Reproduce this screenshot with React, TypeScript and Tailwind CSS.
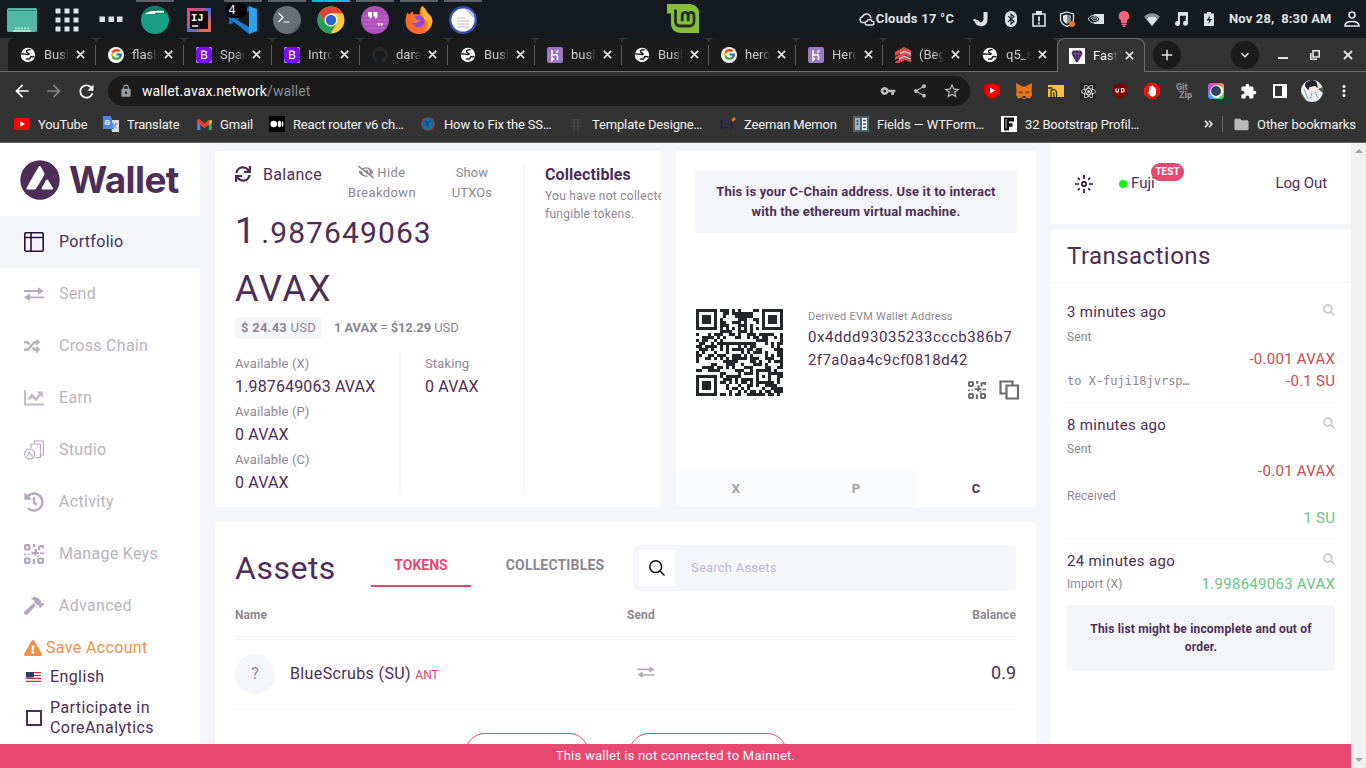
import React from "react";
import {
  FaSync, FaEyeSlash, FaSearch, FaRandom, FaHistory, FaHammer, FaExclamationTriangle, FaGithub, FaReact,
} from "react-icons/fa";
import { FcGoogle } from "react-icons/fc";
import { BsBootstrapFill } from "react-icons/bs";
import {
  MdVpnKey, MdShare, MdStarBorder, MdExtension, MdLock, MdFolder, MdArrowBack, MdArrowForward, MdRefresh,
  MdMoreVert, MdAdd, MdExpandMore,
} from "react-icons/md";

/* ---------- QR code (version 3, level M) ---------- */
const N = 29;
function segment(bits: number[], value: number, len: number) {
  for (let i = len - 1; i >= 0; i--) bits.push((value >> i) & 1);
}
function gfMul(a: number, b: number) {
  let r = 0;
  for (let i = 7; i >= 0; i--) {
    r = (r << 1) ^ ((r >> 7) * 0x11d);
    r ^= ((b >> i) & 1) * a;
  }
  return r;
}
function codewords(text: string) {
  const bits: number[] = [];
  const parts = text.match(/\d{6,}|(?:(?!\d{6,}).)+/g) || [];
  for (const p of parts) {
    if (/^\d{6,}$/.test(p)) {
      segment(bits, 1, 4);
      segment(bits, p.length, 10);
      for (let i = 0; i < p.length; i += 3) {
        const g = p.slice(i, i + 3);
        segment(bits, Number(g), g.length * 3 + 1);
      }
    } else {
      segment(bits, 4, 4);
      segment(bits, p.length, 8);
      for (const c of p) segment(bits, c.charCodeAt(0), 8);
    }
  }
  segment(bits, 0, Math.min(4, 352 - bits.length));
  while (bits.length % 8) bits.push(0);
  const data: number[] = [];
  for (let i = 0; i < bits.length; i += 8) data.push(parseInt(bits.slice(i, i + 8).join(""), 2));
  for (let pad = 0xec; data.length < 44; pad ^= 0xec ^ 0x11) data.push(pad);
  const gen: number[] = new Array(26).fill(0);
  gen[25] = 1;
  let root = 1;
  for (let i = 0; i < 26; i++) {
    for (let j = 0; j < 26; j++) {
      gen[j] = gfMul(gen[j], root);
      if (j + 1 < 26) gen[j] ^= gen[j + 1];
    }
    root = gfMul(root, 2);
  }
  const ec: number[] = new Array(26).fill(0);
  for (const b of data) {
    const f = b ^ (ec.shift() as number);
    ec.push(0);
    gen.forEach((g, i) => (ec[i] ^= gfMul(g, f)));
  }
  return data.concat(ec);
}
const MASK = 4;
const masked = (x: number, y: number) => (Math.floor(x / 3) + Math.floor(y / 2)) % 2 === 0;
function build(text: string) {
  const m: boolean[][] = Array.from({ length: N }, () => new Array(N).fill(false));
  const fn: boolean[][] = Array.from({ length: N }, () => new Array(N).fill(false));
  const set = (x: number, y: number, v: boolean) => {
    if (x < 0 || y < 0 || x >= N || y >= N) return;
    m[y][x] = v;
    fn[y][x] = true;
  };
  for (let i = 0; i < N; i++) {
    set(6, i, i % 2 === 0);
    set(i, 6, i % 2 === 0);
  }
  for (const [cx, cy] of [[3, 3], [N - 4, 3], [3, N - 4]])
    for (let dy = -4; dy <= 4; dy++)
      for (let dx = -4; dx <= 4; dx++) {
        const d = Math.max(Math.abs(dx), Math.abs(dy));
        set(cx + dx, cy + dy, d !== 2 && d !== 4);
      }
  for (let dy = -2; dy <= 2; dy++)
    for (let dx = -2; dx <= 2; dx++) set(22 + dx, 22 + dy, Math.max(Math.abs(dx), Math.abs(dy)) !== 1);
  let rem = MASK;
  for (let i = 0; i < 10; i++) rem = (rem << 1) ^ ((rem >> 9) * 0x537);
  const f = ((MASK << 10) | rem) ^ 0x5412;
  const bit = (i: number) => ((f >> i) & 1) === 1;
  for (let i = 0; i <= 5; i++) set(8, i, bit(i));
  set(8, 7, bit(6));
  set(8, 8, bit(7));
  set(7, 8, bit(8));
  for (let i = 9; i < 15; i++) set(14 - i, 8, bit(i));
  for (let i = 0; i < 8; i++) set(N - 1 - i, 8, bit(i));
  for (let i = 8; i < 15; i++) set(8, N - 15 + i, bit(i));
  set(8, N - 8, true);
  const cw = codewords(text);
  let k = 0;
  for (let right = N - 1; right >= 1; right -= 2) {
    if (right === 6) right = 5;
    for (let v = 0; v < N; v++)
      for (let j = 0; j < 2; j++) {
        const x = right - j;
        const y = ((right + 1) & 2) === 0 ? N - 1 - v : v;
        if (fn[y][x]) continue;
        let b = false;
        if (k < cw.length * 8) b = ((cw[k >> 3] >> (7 - (k & 7))) & 1) === 1;
        k++;
        m[y][x] = b !== masked(x, y);
      }
  }
  return m;
}
function QrCode({ value }: { value: string }) {
  let d = "";
  build(value).forEach((row, y) => row.forEach((v, x) => { if (v) d += `M${x} ${y}h1v1h-1z`; }));
  return (
    <svg viewBox="0 0 29 29" className="h-[87px] w-[87px]" shapeRendering="crispEdges">
      <path d={d} fill="#242729" />
    </svg>
  );
}

/* ---------- small drawings ---------- */
const Globe = () => (
  <svg viewBox="0 0 16 16" className="h-4 w-4">
    <circle cx="8" cy="8" r="7.2" fill="#fff" />
    <path d="M10.500 2.800C8 2.400 6.200 3.400 6.600 4.900c.3 1.100 2.300.9 2.500 1.900.1.900-1.400.6-2.600.5C5 7.200 3.500 6.700 1.200 7M14.600 9.800c-1.400.1-2.300-.6-3.500-.1-1.200.5-.6 1.600-1.600 2.100-.9.5-2.200-.1-3.400.4" fill="none" stroke="#1b1b1b" strokeWidth="1.500" />
  </svg>
);
const Cross = ({ cls }: { cls: string }) => (
  <svg viewBox="0 0 10 10" className={cls} fill="none" stroke="#e4e4e4" strokeWidth="1.900"><path d="M1 1l8 8M9 1 1 9" /></svg>
);
const GoogleTab = () => (
  <span className="flex h-4 w-4 items-center justify-center rounded-full bg-white"><FcGoogle size={13} /></span>
);
const BootTab = () => (
  <span className="flex h-4 w-4 items-center justify-center rounded-[2px] bg-white"><BsBootstrapFill size={16} color="#7a12f8" /></span>
);
const Heroku = () => (
  <svg viewBox="0 0 16 16" className="h-4 w-4">
    <rect width="16" height="16" rx="2" fill="#9b7bc0" />
    <path d="M5 3v5.600c1.500-.7 5.500-1.800 5.500.6V13M10.800 3c0 1.200-.5 1.900-1.200 2.600M5 10.500v2.800l1.400-1.400z" fill="none" stroke="#fff" strokeWidth="1.500" />
  </svg>
);
const Todo = () => (
  <svg viewBox="0 0 16 16" className="h-4 w-4">
    <path d="M0 5 9 0l7 3.500v3L10 4 0 9zM0 10l9-5 7 3v2.500l-6-2.500-10 5zM0 15l9-5 7 3v2.500l-6-2.500-6 3H0z" fill="#e44a50" />
    <path d="M5 6.500 9.500 4.500 16 7M4 12l5.500-2.700L16 12" stroke="#d8cdd0" strokeWidth="1.500" fill="none" />
  </svg>
);
const Gem = () => (
  <svg viewBox="0 0 16 16" className="h-4 w-4">
    <rect width="16" height="16" fill="#fff" />
    <path d="M4 2.500h8l1.500 3L9 14H7L2.500 5.500z" fill="#3b1f52" />
    <path d="M6 3l1 9M10 3l-1 9M3 6h10" stroke="#8c6ca6" strokeWidth=".8" />
  </svg>
);
const Arrows = ({ cls }: { cls: string }) => (
  <svg viewBox="0 0 20 14" className={cls} fill="#b6a8be">
    <path d="M0 3h14V.3L20 4l-6 3.700V5H0zM20 9.500H6V6.300L0 10.300l6 3.700v-2.700h14z" />
  </svg>
);
const QrGlyph = ({ cls, color }: { cls: string; color: string }) => (
  <svg viewBox="0 0 20 20" className={cls} fill={color}>
    <g fill="none" stroke={color} strokeWidth="2.200">
      <rect x="1.100" y="1.100" width="4.400" height="4.400" rx=".8" />
      <rect x="1.100" y="14.500" width="4.400" height="4.400" rx=".8" />
      <rect x="14.500" y="14.500" width="4.400" height="4.400" rx=".8" />
    </g>
    <path d="M9 0h2.300v3H9zM14 1.500h2V1h4v3.500h-1.800V3.500H16V6h-2zM10.500 5H13v3h2v2h-2.500v1.500H10V10H7.500V8h3zM0 9.500h2V11H0zM4 9.500h1.500V11H4zM8.700 15h2.300v5H8.700zM16 8.500h4v1.800h-4zM13 11.500h2V13h-2z" />
  </svg>
);

/* ---------- desktop panel ---------- */
const Cell = ({ bar, children }: { bar?: string; children: React.ReactNode }) => (
  <div className="flex h-[38px] w-11 flex-col items-center">
    <div className={`h-0.5 w-[38px] ${bar || ""}`} />
    <div className="flex flex-1 items-center justify-center pb-px">{children}</div>
  </div>
);
const Tray = ({ children }: { children: React.ReactNode }) => (
  <div className="flex w-[28.300px] items-center justify-center">{children}</div>
);
function Panel() {
  const g = "bg-[#5b6166]";
  return (
    <div className="flex h-[38px] w-full items-center bg-[#151a1e] pl-px text-[#dfe3e6]">
      <Cell>
        <svg viewBox="0 0 30 24" className="-ml-[2px] h-6 w-[30px]"><rect width="30" height="24" rx="1.500" fill="#52b8a6" /><path d="M1 2.500h28" stroke="#347f76" /><path d="M8 20.500h14" stroke="#a9ded3" strokeWidth="2" strokeDasharray="2 1" /><path d="M6 23h18" stroke="#a9ded3" strokeWidth="2" /></svg>
      </Cell>
      <Cell>
        <svg viewBox="0 0 24 24" className="h-6 w-6" fill="#dfe3e6">{[0, 9, 18].map((y) => [0, 9, 18].map((x) => <rect key={`${x}-${y}`} x={x + 0.500} y={y + 0.500} width="5" height="5" />))}</svg>
      </Cell>
      <Cell>
        <svg viewBox="0 0 24 24" className="h-6 w-6" fill="#dfe3e6">{[0.500, 9.500, 18].map((x) => <rect key={x} x={x} y="8.500" width="5.500" height="5.500" />)}</svg>
      </Cell>
      <Cell bar={g}>
        <svg viewBox="0 0 28 28" className="h-7 w-7"><circle cx="14" cy="14" r="14" fill="#18a085" /><path d="M1.500 8A14 14 0 0 1 26.500 8z" fill="#117a65" /><path d="M4 7.500C8 5 14 4.500 23 5v1.800h-9V8H4z" fill="#fff" /></svg>
      </Cell>
      <Cell>
        <svg viewBox="0 0 24 24" className="h-6 w-6"><defs><linearGradient id="ij" x1="0" y1="0" x2="1" y2="1"><stop offset="0" stopColor="#e8467c" /><stop offset=".35" stopColor="#c9518f" /><stop offset=".5" stopColor="#3d6fe0" /><stop offset=".8" stopColor="#e06a55" /></linearGradient></defs><rect width="24" height="24" fill="url(#ij)" /><rect x="3" y="3" width="18" height="18" fill="#0d0a0d" /><text x="4" y="13" fontFamily="Liberation Mono" fontWeight="bold" fontSize="10.500" fill="#fff">IJ</text><path d="M5 18h6" stroke="#fff" strokeWidth="1.500" /></svg>
      </Cell>
      <Cell bar={g}>
        <div className="relative h-7 w-7">
          <svg viewBox="0 0 28 28" className="h-7 w-7"><path d="M20 0 6 13.500 1.500 10 0 11v6.500l1.500 1L20 5z" fill="#0a70b8" /><path d="M0 11l1.500-1L20 21v7L0 12z" fill="#1381cf" /><path d="M20 0l8 3v22l-8 3z" fill="#29a3ee" /></svg>
          <span className="absolute -left-[4px] -top-[3px] flex h-[15px] w-[22px] items-center justify-center rounded-full bg-black pr-2 font-['DejaVu_Sans_Mono'] text-[12px] leading-none text-white">4</span>
        </div>
      </Cell>
      <Cell bar={g}>
        <svg viewBox="0 0 28 28" className="h-7 w-7"><circle cx="14" cy="14" r="14" fill="#6a6f74" /><path d="M5.500 7 10 11.500 5.500 16M10.500 16h6" fill="none" stroke="#fff" strokeWidth="1.200" /><path d="M17 27.500 27.500 17A14 14 0 0 1 17 27.500z" fill="#595e62" /></svg>
      </Cell>
      <Cell bar="bg-[#00b8d8]">
        <svg viewBox="0 0 28 28" className="h-7 w-7"><circle cx="14" cy="14" r="13.500" fill="#fdc93c" /><path d="M2.300 7.200A13.500 13.500 0 0 1 25.700 7.200H14L8.200 17.300z" fill="#dc4437" /><path d="M2.300 7.200A13.500 13.500 0 0 0 13.500 27.500L19.800 17.300 14 20.500 8.200 17.300z" fill="#23a05a" /><circle cx="14" cy="14" r="6.500" fill="#fff" /><circle cx="14" cy="14" r="5.200" fill="#2a66d0" /></svg>
      </Cell>
      <Cell bar={g}>
        <svg viewBox="0 0 28 28" className="h-7 w-7"><circle cx="14" cy="14" r="14" fill="#ae50b8" /><path d="M2 10h24M1 14h26M2 18h24M4 22h20" stroke="#c27cca" strokeWidth=".7" /><path d="M7 6h4v5l-2 2-.5-2.500H7zM12.500 6h4v5l-2 2-.5-2.500h-1.500zM16.500 17h2v2.500l-1 .8zM19.500 17h2v2.500l-1 .8z" fill="#fff" /></svg>
      </Cell>
      <Cell bar={g}>
        <svg viewBox="0 0 28 28" className="h-7 w-7"><path d="M17 0c4 3 4.500 5 5.500 7 3 2 5.500 5 5 9.500A13.700 13.700 0 0 1 14 28C6 28 .5 22.500.5 15c0-4 1-7 2.500-9l1 3 3.500-4 1 3.500c2-.5 4-.5 6 0C14.500 5 15 2 17 0z" fill="#ff6b2c" /><path d="M17 0c4 3 4.500 5 5.500 7 3 2 5 5 4.500 9.500-1 5-4 8-7 9 3-4 3-8 1-11-2-2-6-5-4-14.500z" fill="#ffb52e" /><circle cx="13.500" cy="15.500" r="6" fill="#9548e0" /><path d="M5 12c2-1.500 5-1 6 1 1 1.500 3 1 4 .5-1 3-3 3-5 3.500-3 0-4-2-5-5z" fill="#ff7a30" /></svg>
      </Cell>
      <Cell bar={g}>
        <svg viewBox="0 0 28 28" className="h-7 w-7"><circle cx="14" cy="14" r="14" fill="#3a4db2" /><circle cx="14" cy="14" r="11.500" fill="#fff" /><path d="M15 2.500 25.500 13l-.5-5-5-4.500z" fill="#c5cae9" /><path d="M8 12h8M8 15h12M8 18h12M8 21h12" stroke="#b5b9bd" strokeWidth="1.200" /></svg>
      </Cell>
      <div className="flex w-[182px]" />
      <svg viewBox="0 0 32 29" className="-mt-px h-[29px] w-8"><path d="M0 0h22c6 0 10 3.500 10 9v20H14C8 29 4 25 4 20V9.500H0z" fill="#86be3c" /><path d="M8.500 5.500v11.800c0 3 1.800 4.700 4.500 4.700h9.500c2.500 0 4.500-1.700 4.500-4.500v-5.700c0-4.500-5.800-4.500-5.800 0v5.500M21.200 11.800c0-4.500-6-4.500-6 0v5.500" fill="none" stroke="#22301a" strokeWidth="2.800" /></svg>
      <div className="ml-auto flex items-center font-['Roboto'] text-[13px] font-bold leading-none">
        <svg viewBox="0 0 18 16" className="mr-px h-4 w-4" fill="none" stroke="#dfe3e6" strokeWidth="1.600"><path d="M7 12H4a3.200 3.200 0 0 1-.3-6.300A5 5 0 0 1 13 5.500c.3.600.3 1.300.2 1.900M9 14.800a2.100 2.100 0 0 1 .2-4.200 2.800 2.800 0 0 1 5.400 0 2.100 2.100 0 0 1 .2 4.200z" /></svg>
        <span className="w-[89px] -mt-[2px] whitespace-nowrap tracking-[0.25px]">Clouds 17 °C</span>
        <div className="flex w-[32px] items-center justify-center"><svg viewBox="0 0 16 16" className="h-4 w-4"><path d="M3.500 9.500C4 12.500 6 13.500 8.800 13.200c2.700-.4 3.700-2.500 3.700-5V1" fill="none" stroke="#dfe3e6" strokeWidth="4" /><path d="M.5 8.500 6 11.500" stroke="#dfe3e6" strokeWidth="2" /></svg></div>
        <Tray><svg viewBox="0 0 12 16" className="h-4 w-3"><rect width="12" height="16" rx="6" fill="#dfe3e6" /><path d="M3 5.200 9 10.500 6 13V3l3 2.500-6 5.300" fill="none" stroke="#151a1e" strokeWidth="1.100" /></svg></Tray>
        <Tray><svg viewBox="0 0 14 16" className="h-4 w-[14px]"><path d="M1 3h12v12H1z" fill="none" stroke="#dfe3e6" strokeWidth="1.600" /><path d="M4 0h6v4H4z" fill="#dfe3e6" /><path d="M7 5.500v5M7 11.500v2" stroke="#dfe3e6" strokeWidth="1.800" /></svg></Tray>
        <Tray><svg viewBox="0 0 16 16" className="h-4 w-4"><path d="M8 1 14.500 3v5c0 3.500-3 6-6.500 7.300C4.500 14 1.500 11.500 1.500 8V3z" fill="none" stroke="#dfe3e6" strokeWidth="1.300" /><path d="M8 3.500v9.500C5.500 12 4 10 4 8V4.500z" fill="#dfe3e6" /><path d="M8 3.500v9.500C10.500 12 12 10 12 8V4.500z" fill="#8a8f93" /><circle cx="13" cy="13" r="3" fill="#f1712b" /></svg></Tray>
        <Tray><svg viewBox="0 0 16 12" className="h-3 w-4"><path d="M6 1h10v10H6z" fill="#dfe3e6" /><path d="M0 6c3-5 9-5 12 0-3 5-9 5-12 0z" fill="#151a1e" stroke="#dfe3e6" /><path d="M3 6c2-3 5-3 7 0-2 2-4 2.500-5.500.5C5.500 5 7 5 8 6" fill="none" stroke="#dfe3e6" /></svg></Tray>
        <Tray><svg viewBox="0 0 12 16" className="h-4 w-3"><path d="M6 0a5.200 5.200 0 0 1 3 9.500V12H3V9.500A5.200 5.200 0 0 1 6 0zM3.500 12.500h5V14h-5zM4.500 14.500h3V16h-3z" fill="#f9637f" /></svg></Tray>
        <Tray><svg viewBox="0 0 16 13" className="h-[13px] w-4"><path d="M0 3.500C4.500-1 11.500-1 16 3.500L8 13z" fill="#8c9195" /><path d="M2.500 6C5.500 3 10.500 3 13.500 6L8 13z" fill="#dfe3e6" /></svg></Tray>
        <Tray><svg viewBox="0 0 14 14" className="h-[14px] w-[14px]" fill="#dfe3e6"><path d="M4 0h10v11.200a2.500 2.500 0 1 1-2.200-2.400V3.800H6v8a2.500 2.500 0 1 1-2-2.700z" /></svg></Tray>
        <Tray><svg viewBox="0 0 10 14" className="h-[14px] w-[10px]"><path d="M0 1.500h3V0h4v1.500h3V14H0z" fill="#dfe3e6" /><path d="M6 3.500 2.500 8.500H5L4.500 12 7.800 7H5.500z" fill="#151a1e" /></svg></Tray>
        <span className="-mt-[2px] ml-[6px] w-[103px] whitespace-nowrap tracking-[0.15px]">Nov 28,&nbsp; 8:30 AM</span>
        <svg viewBox="0 0 16 16" className="ml-3 mr-[6px] h-4 w-4" fill="none" stroke="#dfe3e6" strokeWidth="1.700"><circle cx="8" cy="4" r="3" /><path d="M1 15c0-3 2.500-4.500 7-4.500s7 1.500 7 4.500z" /></svg>
      </div>
    </div>
  );
}

/* ---------- browser frame ---------- */
const TABS: [React.ReactNode, string, string][] = [
  [<Globe />, "Bush", "w-[88px]"], [<GoogleTab />, "flask", "w-[88px]"], [<BootTab />, "Spac", "w-[88px]"],
  [<BootTab />, "Intro", "w-[88px]"], [<FaGithub size={16} color="#24292e" />, "dara", "w-[88px]"], [<Globe />, "Bush", "w-[87px]"],
  [<Heroku />, "bush", "w-[87px]"], [<Globe />, "Bush", "w-[87px]"], [<GoogleTab />, "hero", "w-[87px]"],
  [<Heroku />, "Hero", "w-[87px]"], [<Todo />, "(Beg", "w-[87px]"], [<Globe />, "q5_s", "w-[87px]"],
];
const TabBody = ({ icon, title }: { icon: React.ReactNode; title: string }) => (
  <>
    <span className="flex w-4 shrink-0 justify-center">{icon}</span>
    <span className="ml-2 w-[25px] shrink-0 overflow-hidden whitespace-nowrap text-[13px] [mask-image:linear-gradient(90deg,#000_60%,transparent)]">{title}</span>
    <Cross cls="ml-[7px] h-[9px] w-[9px] shrink-0" />
  </>
);
function TabStrip() {
  return (
    <div className="flex h-[34px] w-full bg-[#333333] text-[#c9c9c9]">
      <div className="w-2 border-b border-[#6e6c6d]" />
      {TABS.map(([icon, title, w], i) => (
        <div key={i} className={`${w} flex h-[34px] shrink-0 items-center overflow-hidden border-b border-[#6e6c6d] bg-[#333333]`}>
          <div className="flex h-full w-full items-center rounded-t-md bg-[#1b1b1b]">
            <div className={`flex h-5 w-full items-center border-r pl-3 ${i === 11 ? "border-transparent" : "border-[#5c5c5c]"}`}>
              <TabBody icon={icon} title={title} />
            </div>
          </div>
        </div>
      ))}
      <div className="flex h-[34px] w-[88px] shrink-0 items-center rounded-t-lg border-x border-t border-[#6e6c6d] bg-[#333333] pl-[11px] text-white">
        <TabBody icon={<Gem />} title="Fast" />
      </div>
      <div className="flex flex-1 items-center border-b border-[#6e6c6d] pl-2">
        <span className="flex h-7 w-7 items-center justify-center rounded-full bg-[#1b1b1b] text-[#e6e6e6]"><MdAdd size={18} /></span>
        <span className="ml-auto flex h-7 w-7 items-center justify-center rounded-full bg-[#1b1b1b] text-[#e6e6e6]"><MdExpandMore size={16} /></span>
        <svg viewBox="0 0 10 10" className="ml-[19px] h-2.5 w-2.5"><path d="M0 8h10" stroke="#e6e6e6" strokeWidth="2" /></svg>
        <svg viewBox="0 0 10 10" className="ml-[22px] h-2.5 w-2.5" fill="none" stroke="#e6e6e6" strokeWidth="1.600"><path d="M3 .8h6.200V7H3zM.8 3v6.200H7" /></svg>
        <Cross cls="ml-[23px] mr-[13px] h-[10px] w-[10px]" />
      </div>
    </div>
  );
}
const Slot = ({ children }: { children: React.ReactNode }) => <span className="flex w-8 shrink-0 items-center justify-center">{children}</span>;
function Toolbar() {
  return (
    <div className="flex h-[38px] w-full items-center bg-[#333333] pl-[6px]">
      <Slot><MdArrowBack size={20} color="#fff" /></Slot>
      <Slot><MdArrowForward size={20} color="#858585" /></Slot>
      <Slot><MdRefresh size={21} color="#fff" /></Slot>
      <div className="ml-[6px] flex h-[30px] w-[862px] items-center rounded-full bg-[#1b1b1b] pl-[11px] text-[#bdbdbd]">
        <MdLock size={14} color="#9a9ca3" />
        <span className="ml-[9px] flex-1 text-[14px] leading-none tracking-[0.1px] text-[#8d8d8d]"><span className="text-white">wallet.avax.network</span>/wallet</span>
        <Slot><MdVpnKey size={16} /></Slot><Slot><MdShare size={16} /></Slot><Slot><MdStarBorder size={18} /></Slot>
        <span className="w-[2px]" />
      </div>
      <span className="w-[6px]" />
      <Slot><svg viewBox="0 0 16 16" className="h-4 w-4"><path d="M0 2l8-2 8 2v7c0 3-4 6-8 7-4-1-8-4-8-7z" fill="#d40000" /><path d="M1.500 3 8 1.500 14.500 3v6c0 2.500-3 4.500-6.500 5.500C4.500 13.500 1.500 11.500 1.500 9z" fill="#f00" /><path d="M6 4.500v6L11 7.500z" fill="#fff" /></svg></Slot>
      <Slot><svg viewBox="0 0 16 16" className="h-4 w-4"><path d="M0 0l6.500 3.500h3L16 0l-.3 8 .3 4-2 3.500-3.500-1L9 16H7l-1.500-1.500-3.500 1L0 12l.5-4z" fill="#e2761b" /><path d="M2 9l4-1 .5 3zM14 9l-4-1-.5 3z" fill="#8a3d12" /><path d="M6.500 13h3L9 15H7z" fill="#222" /></svg></Slot>
      <Slot><svg viewBox="0 0 16 12" className="h-3 w-4"><path d="M0 0h16v12H0z" fill="#f7c13b" /><path d="M0 3h4.500M3 12V5.500C4.500 4 8 4 8.500 7v5M5.700 7v5" fill="none" stroke="#333" strokeWidth="1.300" /></svg></Slot>
      <Slot><span className="flex h-4 w-4 items-center justify-center bg-[#262626]"><FaReact size={15} color="#fff" /></span></Slot>
      <Slot><svg viewBox="0 0 16 16" className="h-4 w-4"><path d="M8 0c2 1.500 4.500 2 7 2v6c0 4-3.500 6.500-7 8-3.500-1.500-7-4-7-8V2c2.500 0 5-.5 7-2z" fill="#800000" /><path d="M4 5.500V8c0 1.500 2.500 1.500 2.500 0V5.500M9.500 5.500h1a1.800 1.800 0 0 1 0 3.600h-1z" fill="none" stroke="#fff" strokeWidth="1.200" /></svg></Slot>
      <Slot><svg viewBox="0 0 16 16" className="h-4 w-4"><path d="M4.700 0h6.600L16 4.700v6.600L11.300 16H4.700L0 11.300V4.700z" fill="#ee1111" /><path d="M5 7V4.500h1.300V3H8V2.500h1.300V4h1.400v1.500H12V10c0 2-1.300 3.500-3.500 3.500-2 0-3-1.200-4.500-4.500l1-.5z" fill="#fff" /></svg></Slot>
      <Slot><span className="flex flex-col text-[9px] font-black leading-[8px] text-[#8c8c8c]"><span>Git</span><span className="pl-[3px]">Zip</span></span></Slot>
      <Slot><span className="flex h-4 w-4 items-center justify-center rounded-[3px] bg-[conic-gradient(#f94f8b,#f9c23c,#3fd07a,#35a7ff,#b14bff,#f94f8b)]"><span className="flex h-[13px] w-[13px] items-center justify-center rounded-full bg-white"><span className="h-[10px] w-[10px] rounded-full bg-[#33435c]" /></span></span></Slot>
      <Slot><MdExtension size={17} color="#fff" /></Slot>
      <Slot><svg viewBox="0 0 14 14" className="h-3.5 w-3.5"><path d="M1 1h12v12H1z" fill="none" stroke="#fff" strokeWidth="2" /><path d="M9 0h5v14H9z" fill="#fff" /></svg></Slot>
      <Slot><svg viewBox="0 0 22 22" className="h-[22px] w-[22px]"><defs><clipPath id="av"><circle cx="11" cy="11" r="11" /></clipPath></defs><g clipPath="url(#av)"><rect width="22" height="22" fill="#eceef2" /><path d="M4 6c0-7 12-8 12-2l1 4-3-2-4 1-3 3z" fill="#23222a" /><path d="M8 7.500l5-1 2 2.500-2 3-4-1z" fill="#f4e8e2" /><path d="M3 9l4 10M14 12l3 6M11 13l-2 6" stroke="#9aa4bd" strokeWidth="1.200" /><path d="M0 12l5 8H0zM17 9l5-2v6z" fill="#4d5a3e" /></g></svg></Slot>
      <Slot><MdMoreVert size={18} color="#fff" /></Slot>
    </div>
  );
}
const BOOKMARKS: [React.ReactNode, string, string][] = [
  [<svg viewBox="0 0 16 12" className="h-3 w-4"><rect width="16" height="12" rx="2.500" fill="#f00" /><path d="M6.300 3.300v5.400L11 6z" fill="#fff" /></svg>, "YouTube", "w-[89px]"],
  [<svg viewBox="0 0 16 16" className="h-4 w-4"><path d="M7 4h9v12H9z" fill="#dcdcdc" /><path d="M0 0h8l3 13H0z" fill="#4a86e8" /><text x="1.500" y="9" fontSize="8" fontWeight="bold" fill="#fff" fontFamily="Roboto">G</text><path d="M10 8h5M12.500 7v1c0 2-1 3-2 4M11 9l3 3.500" stroke="#8a9296" fill="none" /></svg>, "Translate", "w-[93px]"],
  [<svg viewBox="0 0 16 12" className="h-[11px] w-[15px]"><path d="M0 2v10h3.500V5z" fill="#4285f4" /><path d="M16 2v10h-3.500V5z" fill="#34a853" /><path d="M12.500 1.500 16 1v3l-3.500 3z" fill="#fbbc04" /><path d="M0 1.500C1-.5 2.500 0 3.500 1L8 4.500 12.500 1v5.500L8 10 0 4z" fill="#ea4335" /></svg>, "Gmail", "w-[73px]"],
  [<svg viewBox="0 0 16 16" className="h-4 w-4"><rect width="16" height="16" fill="#000" /><circle cx="4.800" cy="8" r="3.300" fill="#fff" /><ellipse cx="10.500" cy="8" rx="1.700" ry="3.200" fill="#fff" /><ellipse cx="13.600" cy="8" rx=".8" ry="2.900" fill="#fff" /></svg>, "React router v6 ch…", "w-[151px]"],
  [<svg viewBox="0 0 16 16" className="h-4 w-4"><circle cx="8" cy="8" r="6.600" fill="#1b6ca8" stroke="#a02c2c" strokeWidth="1.200" strokeDasharray="12 4" /><path d="M5 4.500c2 1 3 3 3 7M11 4c-2 1-3 2-3 4M5 9h3" stroke="#12507f" fill="none" strokeWidth="1.300" /></svg>, "How to Fix the SS…", "w-[148px]"],
  [<svg viewBox="0 0 16 16" className="h-4 w-4"><path d="M3 4h10M3 7h10M3 10h10M6 3v11M10 3v11" stroke="#494949" strokeWidth="1.200" /></svg>, "Template Designe…", "w-[152px]"],
  [<svg viewBox="0 0 16 16" className="h-4 w-4" fill="none" stroke="#23214a" strokeWidth="1.400"><path d="M3 4.500H1.500v8H3M10 4.500h1.500v8H10M5 7v1.500M8.500 7v1.500M4.500 10.500c1 1.500 3.500 1.500 4.500 0" /><path d="M12 5l3-3" stroke="#f07a10" strokeWidth="2.500" /></svg>, "Zeeman Memon", "w-[133px]"],
  [<svg viewBox="0 0 16 16" className="h-4 w-4"><rect width="16" height="16" fill="#4d6170" /><path d="M2 2h5v12H2z" fill="#9fb4c2" /><path d="M9 2h5v12H9z" fill="#f2f5f7" /><path d="M10 4.500h3M10 8h3M10 11.500h3M3.500 5h2M3.500 8h2" stroke="#34495a" strokeWidth="1.300" /></svg>, "Fields — WTForm…", "w-[148px]"],
  [<svg viewBox="0 0 16 16" className="h-4 w-4"><rect width="16" height="16" fill="#fff" /><path d="M3 1.500h10v4H8v1.700h3.500v3.600H8v3.700H3z" fill="#111" /><path d="M5 3v9.500" stroke="#fff" strokeWidth=".7" /></svg>, "32 Bootstrap Profil…", "w-[190px]"],
];
function Bookmarks() {
  return (
    <div className="flex h-[33px] w-full items-center border-b border-[#676466] bg-[#333333] pb-1 pl-[14px] text-[13px] leading-none text-[#f2f2f2]">
      {BOOKMARKS.map(([icon, label, w]) => (
        <div key={label} className={`${w} flex shrink-0 items-center whitespace-nowrap tracking-[-0.15px]`}>
          <span className="mr-2 flex w-4 justify-center">{icon}</span>{label}
        </div>
      ))}
      <svg viewBox="0 0 9 8" className="ml-[13px] h-2 w-[9px]" fill="none" stroke="#f2f2f2" strokeWidth="1.600"><path d="M1 .8 4 4 1 7.200M5 .8 8 4 5 7.200" /></svg>
      <span className="ml-[9px] mr-[10px] h-4 w-px bg-[#6a6a6a]" />
      <MdFolder size={17} color="#b9b9b9" />
      <span className="ml-[7px] whitespace-nowrap tracking-[-0.05px]">Other bookmarks</span>
    </div>
  );
}

/* ---------- wallet ---------- */
const NavItem = ({ icon, label, active }: { icon: React.ReactNode; label: string; active?: boolean }) => (
  <div className={`flex h-[52px] items-center pl-6 text-[16px] ${active ? "bg-[#f5f6fa] text-[#4c2e56]" : "text-[#b9b5bd]"}`}>
    <span className="flex w-[35px] items-center">{icon}</span>
    <span className="tracking-[0.3px]">{label}</span>
  </div>
);
function Sidebar() {
  return (
    <aside className="h-full w-[200px] shrink-0 bg-white text-[#4c2e56]">
      <div className="flex h-[73px] items-center pl-5">
        <svg viewBox="0 0 40 40" className="h-10 w-10"><circle cx="20" cy="20" r="19.700" fill="#4c2e56" /><path d="M18.300 7.200q1.400-2.200 2.800 0l3 5.300q.7 1.300 0 2.800L16.500 28q-.8 1.600-2.800 1.600H8q-2.300 0-1.300-2zM25.800 20.600q1.300-2 2.600 0l4.300 7.200q1 1.800-1 1.800h-8.800q-2 0-1-1.800z" fill="#fff" /></svg>
        <span className="ml-[9px] font-['Inter'] text-[37px] font-bold leading-none tracking-[-0.6px]">Wallet</span>
      </div>
      <NavItem active label="Portfolio" icon={<svg viewBox="0 0 20 20" className="h-5 w-5" fill="none" stroke="#2b0f3d" strokeWidth="1.600"><rect x=".8" y=".8" width="18.400" height="18.400" rx="1" /><path d="M1 5.500h18M7 1v18" /></svg>} />
      <NavItem label="Send" icon={<Arrows cls="h-[14px] w-5" />} />
      <NavItem label="Cross Chain" icon={<FaRandom size={16} color="#b9b5b9" />} />
      <NavItem label="Earn" icon={<svg viewBox="0 0 20 16" className="h-4 w-5" fill="none" stroke="#c4bac9" strokeWidth="2"><path d="M1 0v14.500h19" /><path d="M4.500 9.500 8 5.500l4 4L16 4.500" strokeWidth="2.600" /><path d="M12.500 1.500H19V8z" fill="#c4bac9" stroke="none" /></svg>} />
      <NavItem label="Studio" icon={<svg viewBox="0 0 20 20" className="h-5 w-5" fill="none" stroke="#b6a8be" strokeWidth="1.200"><path d="M10.500 3V1h8.800v14H17M7 8V4h9.500v13.500H11.500" /><circle cx="5.700" cy="14" r="5" /><path d="M3.500 16.200 5.500 12l1.500 3M7.500 16.200l.8-1.700" /></svg>} />
      <NavItem label="Activity" icon={<FaHistory size={20} color="#b6a8be" />} />
      <NavItem label="Manage Keys" icon={<QrGlyph cls="h-5 w-5" color="#b6a8be" />} />
      <NavItem label="Advanced" icon={<FaHammer size={20} color="#b6a8be" />} />
      <div className="flex h-[30px] items-center pl-6 pt-px text-[16px] text-[#f0914a]"><FaExclamationTriangle size={18} /><span className="ml-1 tracking-[0.35px]">Save Account</span></div>
      <div className="flex h-[29px] items-center pl-[26px] text-[16px]">
        <svg viewBox="0 0 15 10" className="h-2.5 w-[15px]"><rect width="15" height="10" fill="#fff" /><path d="M0 .6h15M0 3.500h15M0 6.400h15M0 9.300h15" stroke="#c8313e" strokeWidth="1.200" /><rect width="8" height="5.500" fill="#2c3a68" /></svg>
        <span className="ml-[9px] tracking-[0.4px]">English</span>
      </div>
      <div className="mt-[7px] flex h-10 items-center pl-[26px] text-[16px] leading-5">
        <span className="h-4 w-4 border-2 border-[#4c2e56]" /><span className="ml-2 whitespace-nowrap tracking-[0.42px]">Participate in<br />CoreAnalytics</span>
      </div>
    </aside>
  );
}
const Pair = ({ label, value }: { label: string; value: string }) => (
  <div className="h-12 whitespace-nowrap">
    <div className="h-6 pt-px text-[13px] leading-6 tracking-[0.15px] text-[#8d8791]">{label}</div>
    <div className="h-6 pt-px text-[16px] leading-[21px] tracking-[0.15px]">{value}</div>
  </div>
);
function BalanceCard() {
  return (
    <section className="flex h-[356px] w-[446px] overflow-hidden rounded bg-white py-3 pl-5">
      <div className="w-[288px] shrink-0">
        <div className="flex h-[40px] items-start">
          <FaSync size={16} className="mt-[3px]" />
          <span className="ml-3 w-[70px] text-[16px] leading-6 tracking-[0.3px]">Balance</span>
          <span className="ml-[4px] w-[90px] text-center text-[13px] leading-5 tracking-[0.4px] text-[#8d8791]"><FaEyeSlash size={16} className="mr-[3px] inline align-[-3px]" />Hide<br />Breakdown</span>
          <span className="w-[90px] text-center text-[13px] leading-5 tracking-[0.1px] text-[#8d8791]">Show<br />UTXOs</span>
        </div>
        <div className="h-[58px] whitespace-nowrap text-[36px] leading-[57px]">1 <span className="-ml-[3px] text-[30px] tracking-[1.1px]">.987649063</span></div>
        <div className="h-[56px] text-[36px] leading-[56px] tracking-[2px]">AVAX</div>
        <div className="flex h-[22px] items-center whitespace-nowrap text-[13px] text-[#8d8791]">
          <span className="flex h-[22px] w-[87px] items-center justify-center rounded-[3px] bg-[#f5f6fa] tracking-[0.25px]"><b>$ 24.43</b>&nbsp;USD</span>
          <span className="ml-3 tracking-[-0.1px]"><b>1 AVAX</b> = <b>$12.29</b> USD</span>
        </div>
        <div className="mt-3 flex h-[144px]">
          <div className="w-[166px] border-r-2 border-[#f5f6fa]"><Pair label="Available (X)" value="1.987649063 AVAX" /><Pair label="Available (P)" value="0 AVAX" /><Pair label="Available (C)" value="0 AVAX" /></div>
          <div className="pl-6"><Pair label="Staking" value="0 AVAX" /></div>
        </div>
      </div>
      <div className="h-full border-l-2 border-[#f5f6fa] pl-5">
        <div className="h-6 text-[16px] font-bold leading-6 tracking-[0.1px]">Collectibles</div>
        <div className="whitespace-nowrap text-[12px] leading-[18px] tracking-[0.27px] text-[#8d8791]">You have not collected any non<br />fungible tokens.</div>
      </div>
    </section>
  );
}
function AddressCard() {
  return (
    <section className="flex h-[356px] w-[360px] flex-col overflow-hidden rounded bg-white">
      <div className="ml-[19px] mt-[19px] flex h-[63px] w-[322px] items-center justify-center bg-[#f5f6fa] text-center text-[13px] font-bold leading-5 tracking-[0.17px]">
        <span>This is your C-Chain address. Use it to interact<br />with the ethereum virtual machine.</span>
      </div>
      <div className="ml-5 mt-[76px] flex h-[92px]">
        <QrCode value="0x4ddd93035233cccb386b72f7a0aa4c9cf0818d42" />
        <div className="ml-[25px] w-[211px] whitespace-nowrap">
          <div className="text-[11px] leading-[15px] tracking-[0.24px] text-[#8d8791]">Derived EVM Wallet Address</div>
          <div className="mt-[2px] text-[15px] leading-[23px]"><span className="tracking-[0.57px]">0x4ddd93035233cccb386b7</span><br /><span className="tracking-[0.42px]">2f7a0aa4c9cf0818d42</span></div>
          <div className="mt-[8px] flex justify-end gap-[13px]">
            <QrGlyph cls="h-[18px] w-[18px] mt-px" color="#6e6b70" />
            <svg viewBox="0 0 20 20" className="h-5 w-5" fill="#fff" stroke="#6e6b70" strokeWidth="2.200"><path d="M1.500 1.500h12v12h-12z" /><path d="M7.500 5.500H19v13H7.500z" /></svg>
          </div>
        </div>
      </div>
      <div className="mt-auto flex h-9 text-[13px] font-bold text-[#a39ea8]">
        <span className="flex w-[120px] items-center justify-center bg-[#f9fafc]">X</span>
        <span className="flex w-[120px] items-center justify-center bg-[#f9fafc]">P</span>
        <span className="flex w-[120px] items-center justify-center text-[#4c2e56]">C</span>
      </div>
    </section>
  );
}
function Assets() {
  return (
    <section className="mt-[15px] h-[240px] w-[821px] rounded-t bg-white px-5 pt-[23px]">
      <div className="flex h-[46px] items-center">
        <span className="w-[136px] text-[32px] leading-none tracking-[0.5px]">Assets</span>
        <span className="flex h-[42px] w-[100px] items-center justify-center self-start border-b-2 border-[#e84970] pt-px text-[14px] font-bold text-[#e84970]">TOKENS</span>
        <span className="ml-[34px] flex h-[42px] w-[100px] items-center justify-center self-start whitespace-nowrap border-b-2 border-transparent pt-px text-[14px] font-bold tracking-[0.15px] text-[#8d8791]">COLLECTIBLES</span>
        <div className="ml-auto flex h-[46px] w-[383px] items-center rounded bg-[#f5f6fa] pl-[6px]">
          <span className="flex h-9 w-9 items-center justify-center rounded-[3px] bg-white"><svg viewBox="0 0 16 16" className="h-4 w-4" fill="none" stroke="#111" strokeWidth="1.500"><circle cx="6.700" cy="6.700" r="5.900" /><path d="M11 11l4.500 4.500" /></svg></span>
          <span className="ml-4 text-[13px] tracking-[0.22px] text-[#b9b8d4]">Search Assets</span>
        </div>
      </div>
      <div className="flex h-[46px] items-center border-b border-[#f3f4f8] pt-[2px] text-[12px] font-bold tracking-[0.1px] text-[#8d8791]">
        <span className="w-[392px]">Name</span><span>Send</span><span className="ml-auto">Balance</span>
      </div>
      <div className="mt-0.5 flex h-[70px] items-center border-y border-[#f3f4f8]">
        <span className="flex h-10 w-10 items-center justify-center rounded-full bg-[#f5f6fa] text-[16px] text-[#8d8791]">?</span>
        <span className="ml-[15px] w-[347px] text-[16px] tracking-[0.37px]">BlueScrubs (SU) <span className="text-[12px] tracking-normal text-[#e84970]">ANT</span></span>
        <Arrows cls="mb-1 h-3 w-[18px]" />
        <span className="mb-[3px] ml-auto text-[18px]">0.9</span>
      </div>
      <div className="mt-6 flex pl-[230px]">
        <span className="h-10 w-[124px] rounded-[20px] border border-[#e84970]" />
        <span className="ml-[40px] h-10 w-[158px] rounded-[20px] border border-[#e84970]" />
      </div>
    </section>
  );
}
const Head = ({ text }: { text: string }) => (
  <div className="flex h-6 items-center justify-between text-[15px] leading-none tracking-[0.33px]">{text}<FaSearch size={12} color="#cfcdd1" className="mb-1" /></div>
);
const Row = ({ left, mono, right, tone }: { left?: string; mono?: boolean; right?: string; tone?: string }) => (
  <div className="flex h-[22px] items-center justify-between whitespace-nowrap leading-none text-[#8d8791]">
    <span className={mono ? "font-['DejaVu_Sans_Mono'] text-[12px]" : "text-[12px] tracking-[0.1px]"}>{left}</span>
    <span className={`-mr-[0.250px] text-[15px] tracking-[0.27px] ${tone || ""}`}>{right}</span>
  </div>
);
function RightColumn() {
  const red = "text-[#d04c4c]";
  const green = "text-[#6ac784]";
  return (
    <aside className="flex h-full w-[300px] shrink-0 flex-col">
      <div className="flex h-[81px] items-center bg-white pl-6 pr-6 text-[15px] leading-none">
        <svg viewBox="0 0 20 20" className="h-[18px] w-[18px]" fill="none" stroke="#2b0f3d" strokeWidth="1.900"><circle cx="10" cy="10" r="2.300" /><path d="M10 0v4.500M10 15.500V20M0 10h4.500M15.500 10H20M3.300 3.300l2 2M14.700 14.700l2 2M3.300 16.700l2-2M14.700 5.300l2-2" /></svg>
        <span className="ml-[26px] h-2 w-2 rounded-full bg-[#00ff00]" />
        <div className="relative ml-1">Fuji
          <span className="absolute -top-[13px] left-5 flex h-[18px] w-[33px] items-center justify-center rounded-full bg-[#e84970] pb-px text-[10px] font-bold text-white">TEST</span>
        </div>
        <span className="ml-auto tracking-[-0.1px]">Log Out</span>
      </div>
      <div className="mt-[6px] flex-1 bg-white">
        <div className="flex h-[53px] items-center border-b border-[#f3f4f8] pl-4 text-[24px] leading-none tracking-[0.45px]">Transactions</div>
        <div className="px-4 pt-[17px]">
          <div className="border-b border-[#f3f4f8] pb-[11px]">
            <Head text="3 minutes ago" /><div className="h-0.5" />
            <Row left="Sent" /><Row right="-0.001 AVAX" tone={red} /><Row left="to X-fuji18jvrsp…" mono right="-0.1 SU" tone={red} />
          </div>
          <div className="border-b border-[#f3f4f8] pb-[10px] pt-[9px]">
            <Head text="8 minutes ago" /><div className="h-px" />
            <Row left="Sent" /><Row right="-0.01 AVAX" tone={red} /><div className="h-[3px]" />
            <Row left="Received" /><Row right="1 SU" tone={green} />
          </div>
          <div className="pt-[9px]">
            <Head text="24 minutes ago" />
            <Row left="Import (X)" right="1.998649063 AVAX" tone={green} />
          </div>
          <div className="mt-[10px] flex h-[66px] items-center justify-center bg-[#f5f6fa] text-center text-[12px] font-bold leading-[18px] tracking-[0.18px]">
            <span>This list might be incomplete and out of<br />order.</span>
          </div>
        </div>
      </div>
    </aside>
  );
}

export default function App() {
  return (
    <div className="flex h-[768px] w-[1366px] flex-col overflow-hidden font-['Roboto',sans-serif]">
      <Panel />
      <TabStrip />
      <Toolbar />
      <Bookmarks />
      <div className="flex h-[625px] w-full">
        <div className="flex w-[1351px] flex-col bg-[#f5f6fa] text-[#4c2e56]">
          <div className="flex h-[601px] overflow-hidden">
            <Sidebar />
            <main className="flex-1 px-[15px] pt-2">
              <div className="flex gap-[15px]"><BalanceCard /><AddressCard /></div>
              <Assets />
            </main>
            <RightColumn />
          </div>
          <div className="flex h-6 items-center justify-center bg-[#e84970] pb-px text-[13px] leading-none tracking-[0.24px] text-white">This wallet is not connected to Mainnet.</div>
        </div>
        <div className="flex w-[15px] flex-col items-center justify-between bg-[#f1f1f1] py-[6px]">
          <svg viewBox="0 0 8 4" className="h-1 w-2"><path d="M0 4 4 0l4 4z" fill="#a3a3a3" /></svg>
          <svg viewBox="0 0 8 4" className="h-1 w-2"><path d="M0 0l4 4 4-4z" fill="#a3a3a3" /></svg>
        </div>
      </div>
    </div>
  );
}
